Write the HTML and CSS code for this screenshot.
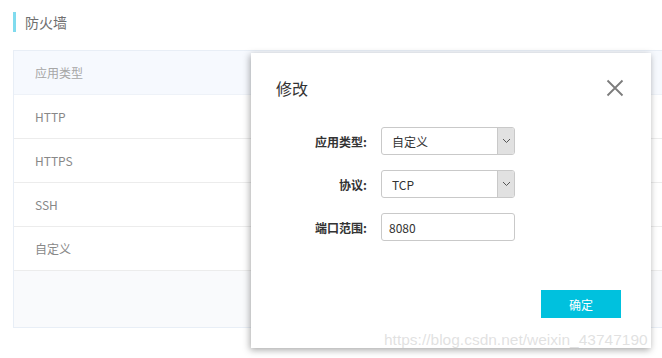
FILE: index.html
```html
<!DOCTYPE html>
<html lang="zh-CN">
<head>
  <meta charset="UTF-8" />
  <title>防火墙</title>
  <link rel="stylesheet" href="styles.css">
</head>
<body>
  <div class="page">
    <h2 class="title">防火墙</h2>

    <div class="table">
      <div class="row head">应用类型</div>
      <div class="row">HTTP</div>
      <div class="row">HTTPS</div>
      <div class="row">SSH</div>
      <div class="row">自定义</div>
      <div class="foot"></div>
    </div>
  </div>

  <div class="modal">
    <div class="modal-head">
      <span class="modal-title">修改</span>
      <svg class="close" width="18" height="18" viewBox="0 0 18 18">
        <path d="M1.5 1.5 L16.5 16.5 M16.5 1.5 L1.5 16.5" stroke="#7c7c7c" stroke-width="1.8" fill="none"/>
      </svg>
    </div>

    <div class="form">
      <div class="field">
        <label>应用类型:</label>
        <div class="select">
          <span>自定义</span>
          <span class="arrow"><svg width="9" height="6" viewBox="0 0 9 6"><path d="M1 1 L4.5 4.5 L8 1" stroke="#555" stroke-width="1" fill="none"/></svg></span>
        </div>
      </div>
      <div class="field">
        <label>协议:</label>
        <div class="select">
          <span>TCP</span>
          <span class="arrow"><svg width="9" height="6" viewBox="0 0 9 6"><path d="M1 1 L4.5 4.5 L8 1" stroke="#555" stroke-width="1" fill="none"/></svg></span>
        </div>
      </div>
      <div class="field">
        <label>端口范围:</label>
        <div class="input">8080</div>
      </div>
    </div>

    <div class="actions">
      <button>确定</button>
    </div>
  </div>

  <div class="watermark">https://blog.csdn.net/weixin_43747190</div>
</body>
</html>
```

FILE: styles.css
```css
body {
  margin: 0;
  font-family: "Noto Sans CJK SC", "Noto Sans", sans-serif;
  background: #fff;
  color: #333;
  width: 662px;
  height: 358px;
  overflow: hidden;
  position: relative;
}
.page {
  padding: 12px 0 0 13px;
}
.title {
  margin: 0;
  height: 20px;
  line-height: 20px;
  border-left: 3px solid #80dbee;
  padding-left: 9px;
  font-size: 14px;
  font-weight: normal;
  color: #6f6f6f;
}
.table {
  margin-top: 18px;
  width: 649px;
  border: 1px solid #e8eef6;
  border-right: none;
}
.row {
  height: 43px;
  line-height: 43px;
  border-bottom: 1px solid #ececec;
  padding-left: 21px;
  font-size: 12px;
  color: #888;
}
.row.head {
  background: #f6f9fe;
  color: #a6a6a6;
  border-bottom: 1px solid #eef2f8;
}
.foot {
  height: 56px;
  background: #f9fafc;
}
.modal {
  position: absolute;
  left: 251px;
  top: 53px;
  width: 400px;
  height: 295px;
  background: #fff;
  box-shadow: -1px 2px 7px rgba(0, 0, 0, 0.35);
}
.modal-head {
  display: flex;
  justify-content: space-between;
  align-items: center;
  padding: 23px 27px 0 25px;
  height: 24px;
}
.modal-title {
  font-size: 16px;
  color: #333;
}
.close {
  margin-top: -1px;
}
.form {
  margin-top: 27px;
  display: flex;
  flex-direction: column;
  gap: 15px;
}
.field {
  display: flex;
  align-items: center;
  height: 28px;
}
.field label {
  width: 116px;
  text-align: right;
  font-size: 12px;
  font-weight: bold;
  color: #333;
  margin-right: 14px;
}
.select, .input {
  box-sizing: border-box;
  width: 134px;
  height: 28px;
  border: 1px solid #c9c9c9;
  border-radius: 3px;
  display: flex;
  align-items: center;
  font-size: 12px;
  color: #333;
}
.select span:first-child {
  flex: 1;
  padding-left: 10px;
}
.input {
  padding-left: 7px;
}
.arrow {
  width: 16px;
  height: 26px;
  background: #e1e1e1;
  border-left: 1px solid #c9c9c9;
  display: flex;
  align-items: center;
  justify-content: center;
  border-radius: 0 2px 2px 0;
}
.actions {
  display: flex;
  justify-content: flex-end;
  padding: 49px 30px 0 0;
}
button {
  width: 80px;
  height: 28px;
  border: none;
  background: #00c1de;
  color: #fff;
  font-family: "Noto Sans CJK SC", sans-serif;
  font-size: 12px;
  cursor: pointer;
}
.watermark {
  position: absolute;
  left: 384px;
  top: 331px;
  font-family: "Liberation Sans", Arial, sans-serif;
  font-size: 15.5px;
  color: rgba(200, 200, 200, 0.55);
  white-space: nowrap;
}
```
